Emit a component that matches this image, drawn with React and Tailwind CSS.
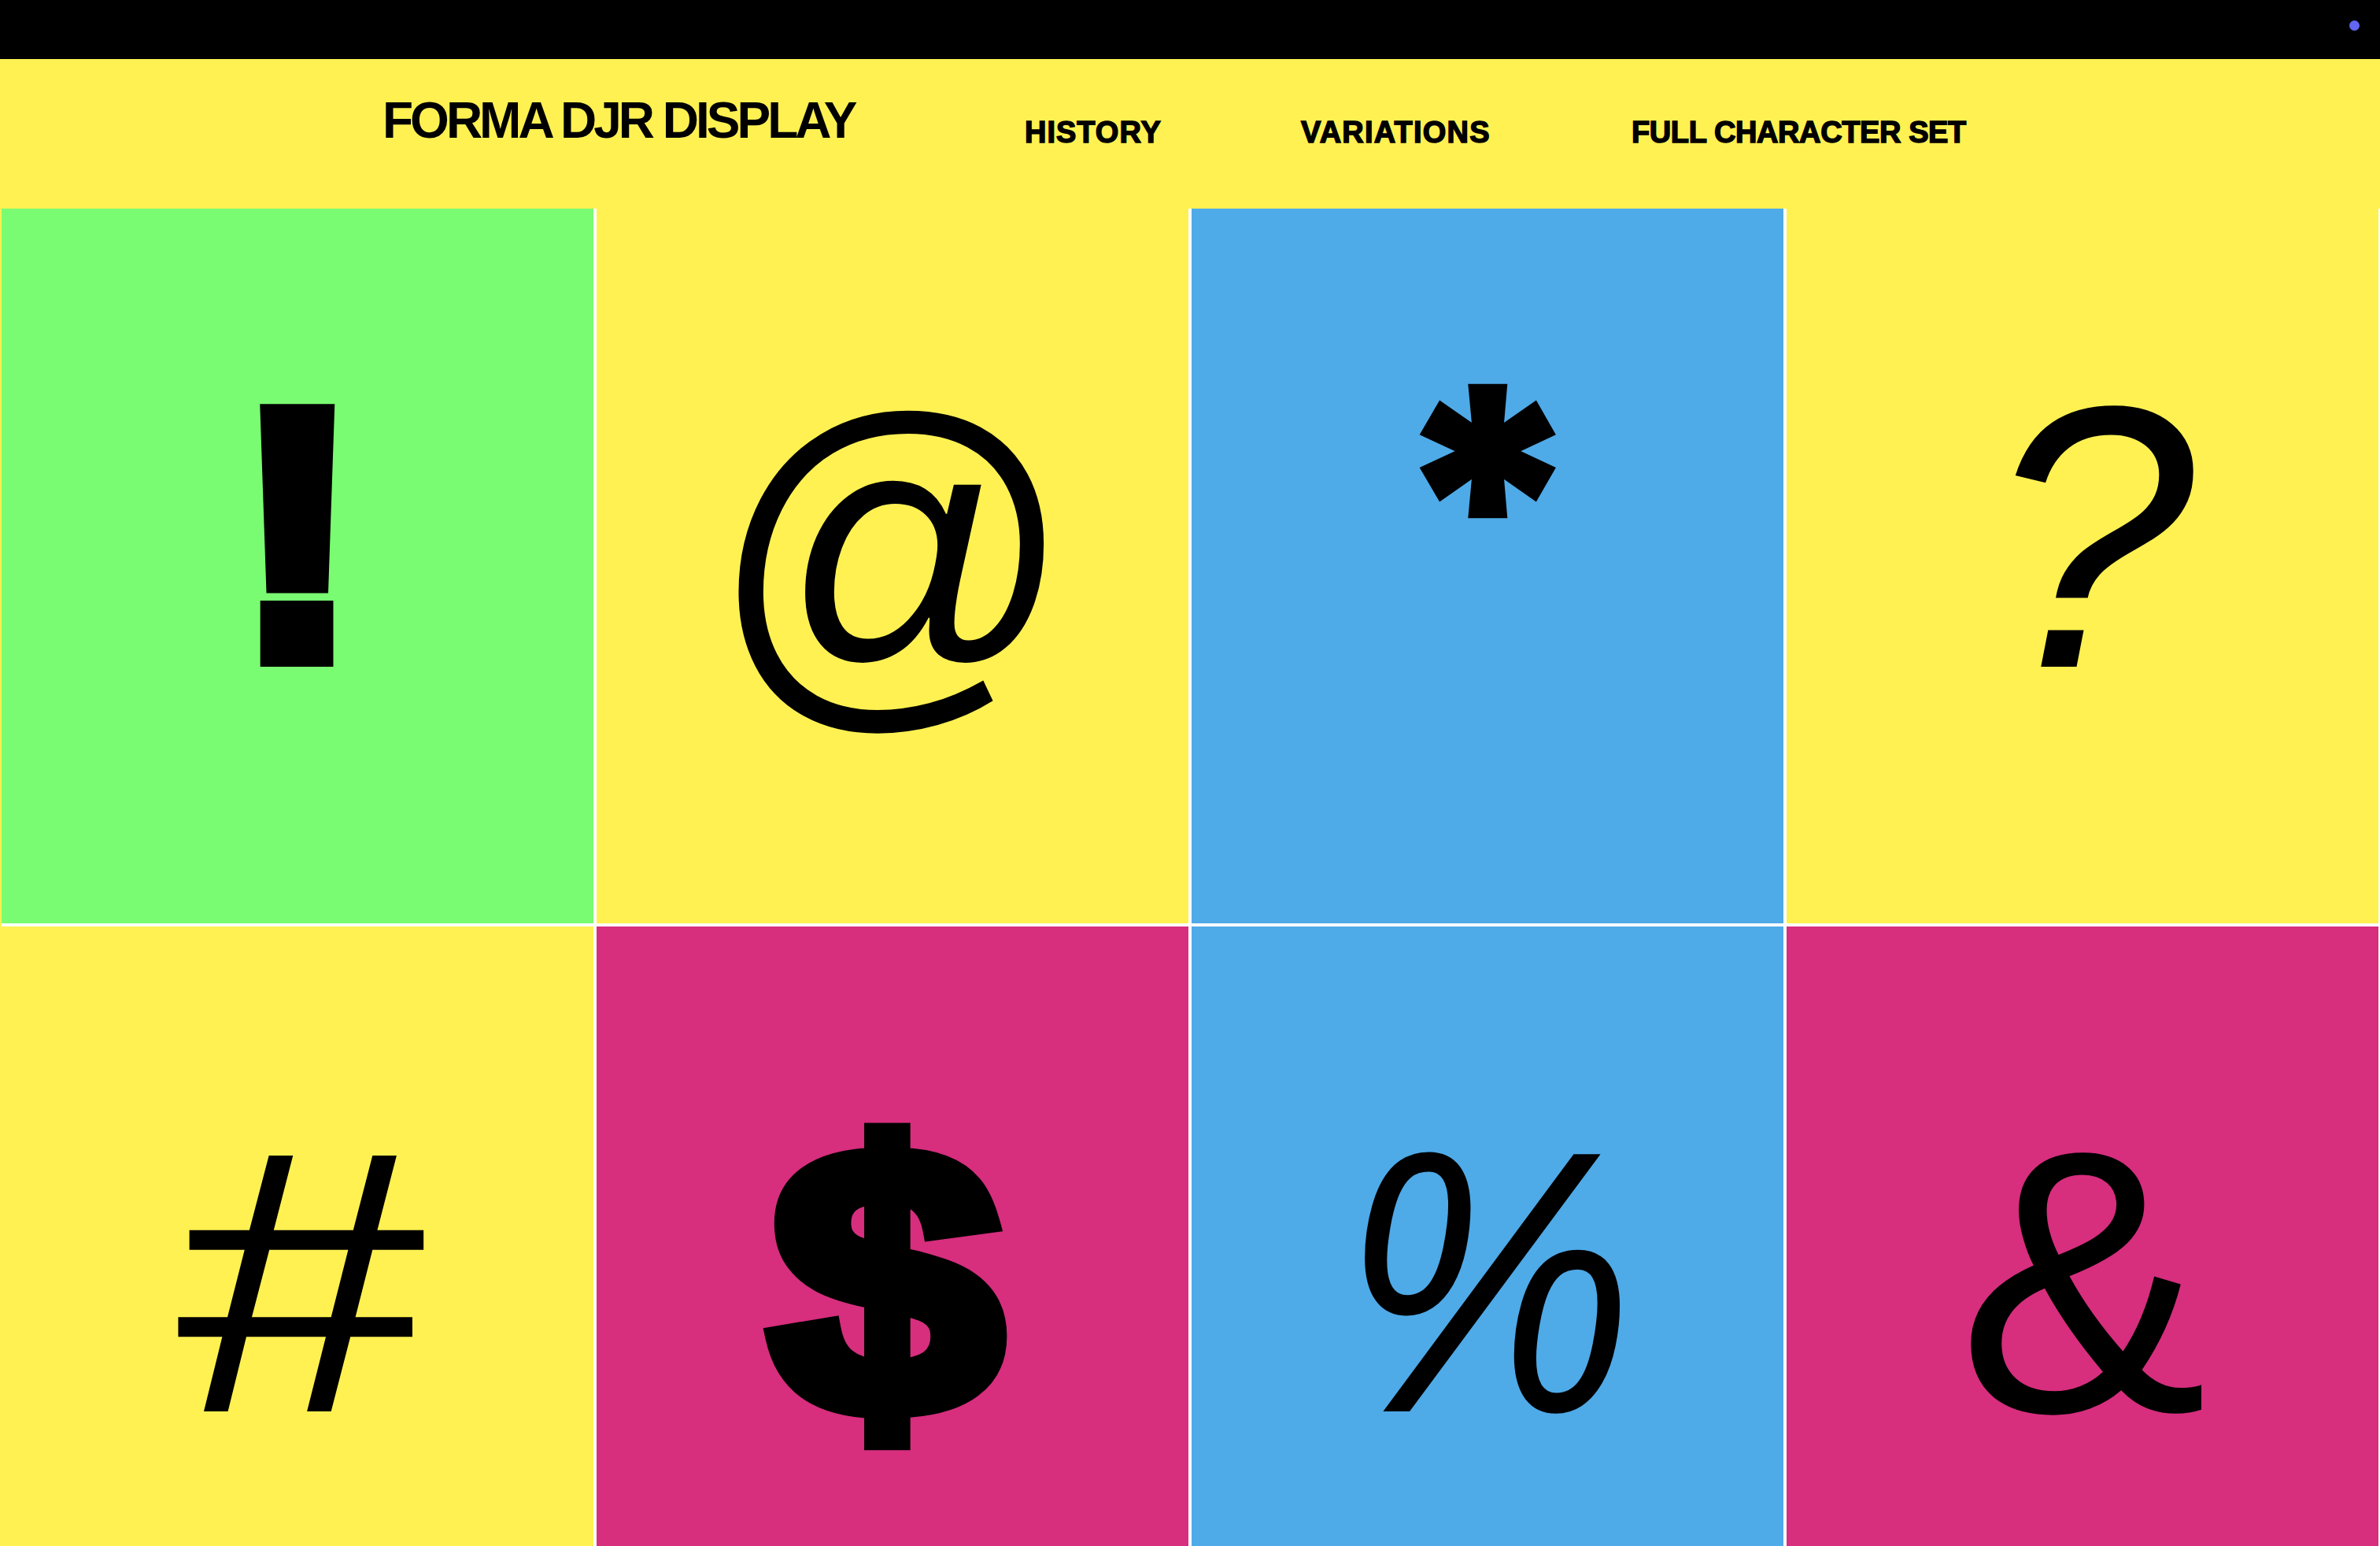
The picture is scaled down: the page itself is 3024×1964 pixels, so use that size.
import React from 'react';

// Glyph specimen grid for Forma DJR Display
const cells = [
    { ch: '!', bg: 'bg-[#7afc72]', cls: "font-['Liberation_Sans',Arial,sans-serif] font-bold [-webkit-text-stroke:26px_black] origin-bottom scale-y-[0.946] -translate-y-[30px]" },
    { ch: '@', bg: 'bg-[#fff152]', cls: "font-['Liberation_Sans',Arial,sans-serif] font-normal scale-x-[0.96] translate-y-[19px]" },
    { ch: '*', bg: 'bg-[#4faae8]', cls: "font-['Inter',sans-serif] font-black [-webkit-text-stroke:4px_black] scale-[0.86] -translate-y-[62px]" },
    { ch: '?', bg: 'bg-[#fff152]', cls: "font-['Liberation_Sans',Arial,sans-serif] font-normal italic translate-x-[10px]" },
    { ch: '#', bg: 'bg-[#fff152]', cls: "font-['Liberation_Sans',Arial,sans-serif] font-normal italic scale-x-[1.2] -translate-x-[4px]" },
    { ch: '$', bg: 'bg-[#d72e7e]', cls: "font-['Liberation_Sans',Arial,sans-serif] font-bold [-webkit-text-stroke:28px_black] scale-x-[1.1] -translate-x-[8px]" },
    { ch: '%', bg: 'bg-[#4faae8]', cls: "font-['Liberation_Sans',Arial,sans-serif] font-normal italic scale-x-[0.88]" },
    { ch: '&', bg: 'bg-[#d72e7e]', cls: "font-['Liberation_Sans',Arial,sans-serif] font-normal" },
];

function Cell({ ch, bg, cls, row }) {
    return (
        <div className={`${bg} flex justify-center overflow-hidden ${row === 0 ? 'h-[908px] pt-[180px]' : 'h-[787px] pt-[214px]'}`}>
            <span className={`block text-[475px] leading-none text-black ${cls}`}>
                {ch}
            </span>
        </div>
    );
}

export default function App() {
    return (
        <div className="w-[3024px] h-[1964px] overflow-hidden bg-[#fff152] font-['Liberation_Sans',Arial,sans-serif]">
            {/* Top bar */}
            <div className="h-[75px] bg-black flex justify-end items-start pt-[26px] pr-[26px]">
                <div className="w-[13px] h-[13px] rounded-full bg-[#6366f1]"></div>
            </div>

            {/* Header */}
            <div className="h-[190px] flex items-start pl-[486px] pt-[46px]">
                <div className="w-[816px] text-[64px] leading-none font-bold tracking-[-4px] text-black">
                    FORMA DJR DISPLAY
                </div>
                <nav className="flex items-start mt-[28px] text-[38px] leading-none font-bold text-black [-webkit-text-stroke:1.5px_black]">
                    <a className="w-[351px] tracking-[1px]">HISTORY</a>
                    <a className="w-[420px] tracking-[1.2px]">VARIATIONS</a>
                    <a className="tracking-[-0.4px]">FULL CHARACTER SET</a>
                </nav>
            </div>

            {/* Glyph grid */}
            <div className="grid grid-cols-4 gap-[4px] bg-white border-l-2 border-[#fff152] pr-[2px]">
                {cells.map((c, i) => (
                    <Cell key={i} {...c} row={i < 4 ? 0 : 1} />
                ))}
            </div>
        </div>
    );
}
